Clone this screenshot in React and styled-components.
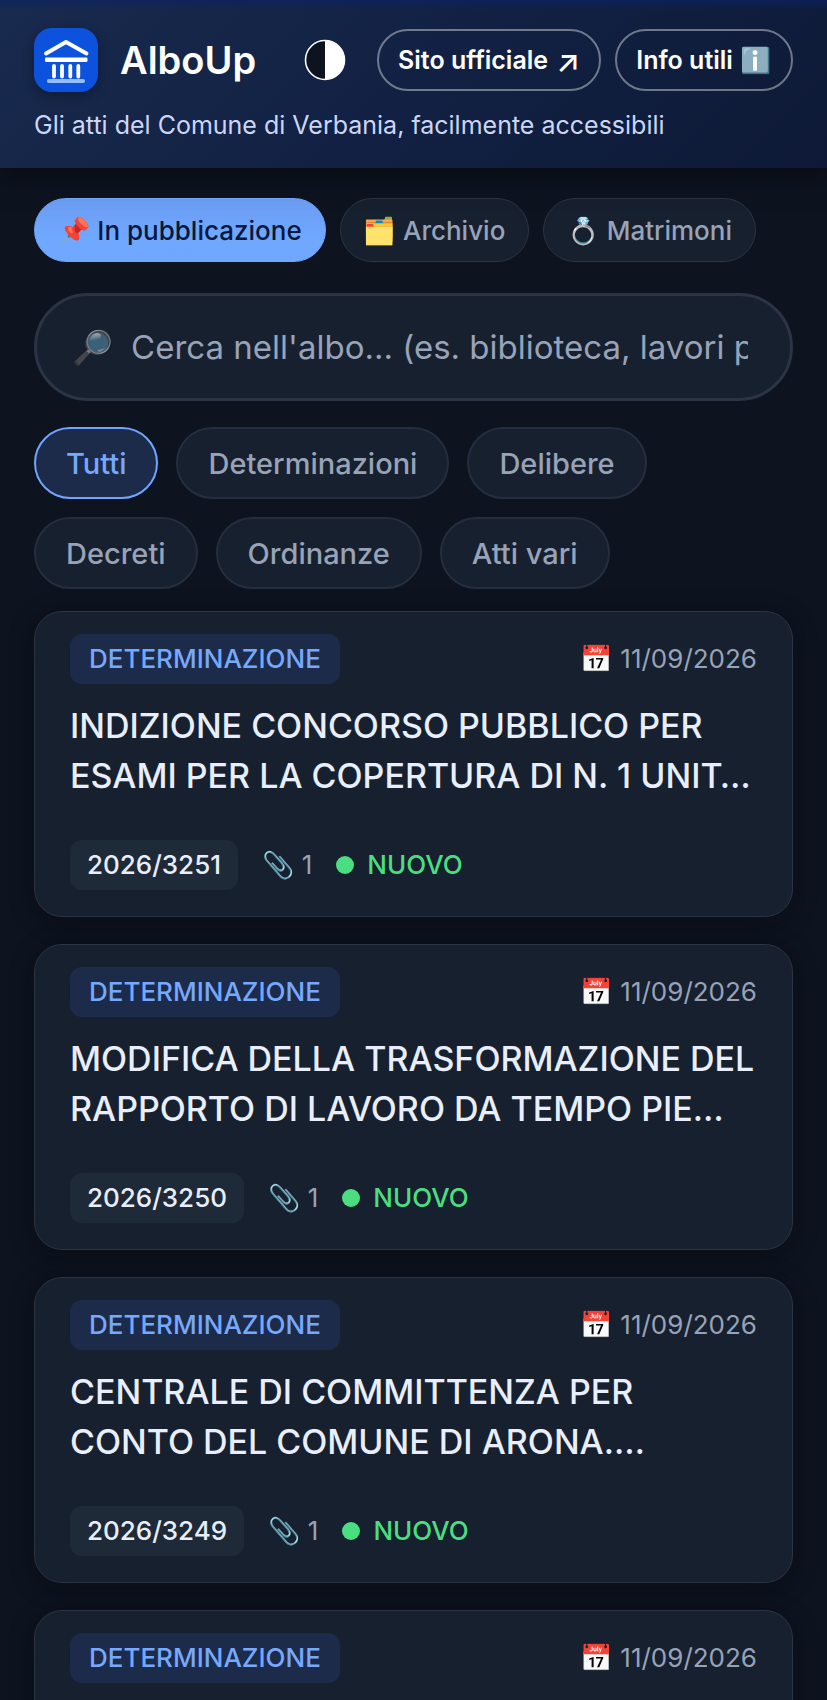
import React, { useState } from 'react'
import styled, { createGlobalStyle } from 'styled-components'

const GlobalStyle = createGlobalStyle`
* {
  box-sizing: border-box;
}
body {
  margin: 0;
  background: #0d131f;
  color: #e8eefc;
  font-family: Inter, 'Noto Color Emoji', sans-serif;
}
button, input {
  font-family: inherit;
}
`

const Header = styled.header`
  position: relative;
  padding: 28px 34px 27px;
  background:
    linear-gradient(180deg, rgba(8, 34, 104, 0.6), rgba(8, 34, 104, 0) 10px),
    linear-gradient(135deg, #182a4e 0%, #122143 50%, #0d1936 100%);
  box-shadow: 0 6px 24px rgba(0, 0, 0, 0.5);
`

const TopRow = styled.div`
  display: flex;
  align-items: center;
  justify-content: space-between;
`

const Brand = styled.div`
  display: flex;
  align-items: center;
  gap: 22px;
`

const Logo = styled.svg`
  width: 64px;
  height: 64px;
  border-radius: 18px;
  box-shadow: 0 4px 12px rgba(0, 0, 0, 0.3);
`

const Name = styled.h1`
  margin: 0;
  font-size: 38px;
  line-height: 48px;
  font-weight: 600;
  color: #ffffff;
`

const Actions = styled.div`
  display: flex;
  align-items: center;
  gap: 14px;
`

const ThemeButton = styled.button`
  display: flex;
  align-items: center;
  justify-content: center;
  width: 76px;
  height: 62px;
  padding: 0;
  border: 0;
  background: none;
  cursor: pointer;
`

const HeaderLink = styled.a`
  display: flex;
  align-items: center;
  gap: 8px;
  height: 62px;
  padding: 0 19px;
  border: 2px solid rgba(255, 255, 255, 0.4);
  border-radius: 31px;
  color: #ffffff;
  font-size: 25px;
  font-weight: 600;
  text-decoration: none;
  white-space: nowrap;
`

const Arrow = styled.span`
  font-size: 31px;
  line-height: 31px;
  font-weight: 500;
`

const Subtitle = styled.p`
  margin: 17px 0 0;
  font-size: 25px;
  line-height: 32px;
  color: #cbd7f5;
`

const Main = styled.main`
  padding: 30px 34px;
`

const Tabs = styled.nav`
  display: flex;
  gap: 14px;
  margin-bottom: 31px;
`

const Tab = styled.button`
  height: 64px;
  padding: 0 23px;
  border: 1px solid ${props => (props.$active ? '#70a5ff' : '#2a3444')};
  border-radius: 32px;
  background: ${props => (props.$active ? 'linear-gradient(180deg, #6b9cf2, #70a8ff 60%)' : '#17202e')};
  color: ${props => (props.$active ? '#07183d' : '#98a3b8')};
  font-size: 26px;
  font-weight: 500;
  white-space: nowrap;
  cursor: pointer;
`

const SearchBox = styled.label`
  display: flex;
  align-items: center;
  gap: 18px;
  height: 108px;
  padding: 0 42px 0 35px;
  margin-bottom: 26px;
  border: 3px solid #2a3444;
  border-radius: 54px;
  background: #17202e;
`

const SearchIcon = styled.span`
  font-size: 33px;
  line-height: 48px;
  opacity: 0.6;
`

const SearchInput = styled.input`
  flex: 1;
  min-width: 0;
  height: 60px;
  padding: 0;
  border: 0;
  outline: 0;
  background: none;
  color: #e8eefc;
  font-size: 33px;

  &::placeholder {
    color: #98a3b8;
    opacity: 1;
  }
`

const Filters = styled.div`
  display: flex;
  flex-wrap: wrap;
  gap: 18px;
  margin-bottom: 22px;
`

const Filter = styled.button`
  height: 72px;
  padding: 0 30px;
  border: 2px solid ${props => (props.$active ? '#70a5ff' : '#242e3e')};
  border-radius: 36px;
  background: ${props => (props.$active ? '#1d2b4b' : '#17202e')};
  color: ${props => (props.$active ? '#76a8fb' : '#98a3b8')};
  font-size: 29px;
  font-weight: 500;
  cursor: pointer;
`

const List = styled.div`
  display: flex;
  flex-direction: column;
  gap: 27px;
`

const Card = styled.article`
  min-height: 306px;
  padding: 22px 35px 26px;
  border: 1px solid #2a3444;
  border-radius: 28px;
  background: #17202e;
  box-shadow: 0 4px 24px rgba(0, 0, 0, 0.35);
`

const CardTop = styled.div`
  display: flex;
  align-items: center;
  justify-content: space-between;
`

const Badge = styled.span`
  padding: 0 19px;
  border-radius: 12px;
  background: #1d2b4b;
  color: #76a8fb;
  font-size: 26px;
  line-height: 50px;
  font-weight: 500;
`

const Muted = styled.span`
  color: #98a3b8;
  font-size: 26px;
  line-height: 50px;
`

const Title = styled.h2`
  margin: 17px 0 39px;
  font-size: 34px;
  line-height: 50px;
  font-weight: 500;
  color: #e8eefc;
`

const Line = styled.span`
  display: block;
  white-space: nowrap;
`

const Meta = styled.div`
  display: flex;
  align-items: center;
  gap: 24px;
`

const Code = styled.span`
  padding: 0 17px;
  border-radius: 12px;
  background: #1f2a38;
  color: #e8eefc;
  font-size: 26px;
  line-height: 50px;
  font-weight: 500;
`

const New = styled.span`
  display: flex;
  align-items: center;
  gap: 13px;
  color: #4ade80;
  font-size: 26px;
  line-height: 50px;
  font-weight: 500;

  &::before {
    content: '';
    width: 18px;
    height: 18px;
    border-radius: 50%;
    background: #4ade80;
  }
`

const tabs = [
  { id: 'pubblicazione', icon: '📌', label: 'In pubblicazione' },
  { id: 'archivio', icon: '🗂️', label: 'Archivio' },
  { id: 'matrimoni', icon: '💍', label: 'Matrimoni' },
]

const filters = ['Tutti', 'Determinazioni', 'Delibere', 'Decreti', 'Ordinanze', 'Atti vari']

const acts = [
  {
    code: '2026/3251',
    lines: ['INDIZIONE CONCORSO PUBBLICO PER', 'ESAMI PER LA COPERTURA DI N. 1 UNIT…'],
  },
  {
    code: '2026/3250',
    lines: ['MODIFICA DELLA TRASFORMAZIONE DEL', 'RAPPORTO DI LAVORO DA TEMPO PIE…'],
  },
  {
    code: '2026/3249',
    lines: ['CENTRALE DI COMMITTENZA PER', 'CONTO DEL COMUNE DI ARONA.…'],
  },
  { code: null, lines: [] },
]

function BankLogo() {
  return (
    <Logo viewBox="0 0 64 64" fill="none" strokeLinecap="round" strokeLinejoin="round" aria-hidden="true">
      <rect width="64" height="64" fill="#0d52dc" />
      <path d="M12 25.5 L32 14 L52.5 25.5" stroke="#fff" strokeWidth="3.8" />
      <rect x="11" y="29.5" width="42.5" height="4.4" rx="1.2" fill="#fff" />
      <path d="M20 38v10.5M28 38v10.5M36.3 38v10.5M44.3 38v10.5" stroke="#fff" strokeWidth="3.8" />
      <rect x="13" y="51" width="38" height="4" rx="1.8" fill="#93bdfd" />
    </Logo>
  )
}

function HalfCircle() {
  return (
    <svg width="42" height="42" viewBox="0 0 42 42" aria-hidden="true">
      <circle cx="21" cy="21" r="19.5" fill="#0d131f" stroke="#fff" strokeWidth="1.6" />
      <path d="M21 1.5a19.5 19.5 0 0 1 0 39z" fill="#fff" />
    </svg>
  )
}

function ActCard({ act }) {
  return (
    <Card>
      <CardTop>
        <Badge>DETERMINAZIONE</Badge>
        <Muted>📅 11/09/2026</Muted>
      </CardTop>
      {act.code && (
        <>
          <Title>
            {act.lines.map(line => (
              <Line key={line}>{line}</Line>
            ))}
          </Title>
          <Meta>
            <Code>{act.code}</Code>
            <Muted>📎 1</Muted>
            <New>NUOVO</New>
          </Meta>
        </>
      )}
    </Card>
  )
}

function App() {
  const [tab, setTab] = useState('pubblicazione')
  const [filter, setFilter] = useState('Tutti')
  const [query, setQuery] = useState('')

  return (
    <>
      <GlobalStyle />
      <Header>
        <TopRow>
          <Brand>
            <BankLogo />
            <Name>AlboUp</Name>
          </Brand>
          <Actions>
            <ThemeButton type="button" aria-label="Tema">
              <HalfCircle />
            </ThemeButton>
            <HeaderLink href="#sito">
              Sito ufficiale <Arrow>↗</Arrow>
            </HeaderLink>
            <HeaderLink href="#info">Info utili <span>ℹ️</span></HeaderLink>
          </Actions>
        </TopRow>
        <Subtitle>Gli atti del Comune di Verbania, facilmente accessibili</Subtitle>
      </Header>
      <Main>
        <Tabs>
          {tabs.map(t => (
            <Tab key={t.id} type="button" $active={t.id === tab} onClick={() => setTab(t.id)}>
              {t.icon} {t.label}
            </Tab>
          ))}
        </Tabs>
        <SearchBox htmlFor="cerca">
          <SearchIcon>🔎</SearchIcon>
          <SearchInput
            id="cerca"
            type="text"
            placeholder="Cerca nell'albo… (es. biblioteca, lavori pubblici)"
            value={query}
            onChange={e => setQuery(e.target.value)}
          />
        </SearchBox>
        <Filters>
          {filters.map(f => (
            <Filter key={f} type="button" $active={f === filter} onClick={() => setFilter(f)}>
              {f}
            </Filter>
          ))}
        </Filters>
        <List>
          {acts.map((act, i) => (
            <ActCard key={i} act={act} />
          ))}
        </List>
      </Main>
    </>
  )
}

export default App
